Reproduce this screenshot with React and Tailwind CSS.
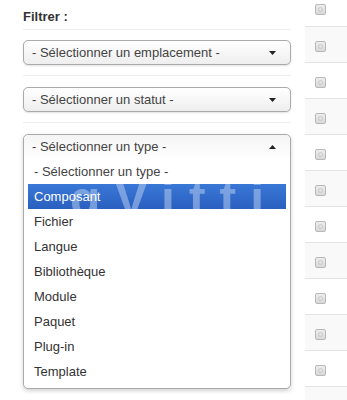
import React from "react";

const OPTIONS = ["Fichier", "Langue", "Bibliothèque", "Module", "Paquet", "Plug-in", "Template"];

function Caret({ up }) {
  return (
    <svg width="7" height="4" viewBox="0 0 7 4" className="shrink-0">
      {up ? <path d="M0 4 L3.5 0 L7 4 Z" fill="#222" /> : <path d="M0 0 L7 0 L3.5 4 Z" fill="#222" />}
    </svg>
  );
}

function Select({ label }) {
  return (
    <div className="flex h-[25px] items-center justify-between rounded-[5px] border border-[#aaa] bg-gradient-to-b from-white to-[#eee] pr-[14px] pl-[8px] text-[13px] text-[#444] shadow-[0_1px_2px_rgba(0,0,0,0.12)]">
      <span>{label}</span>
      <Caret />
    </div>
  );
}

function Checkbox() {
  return (
    <div className="flex h-[11px] w-[11px] items-center justify-center rounded-[2px] border border-[#b8b8b8] bg-gradient-to-b from-[#eee] to-[#d9d9d9]">
      <div className="h-[5px] w-[5px] rounded-full border border-[#c8c8c8]" />
    </div>
  );
}

export default function App() {
  const rows = Array.from({ length: 12 });
  return (
    <div className="flex h-[400px] w-[347px] overflow-hidden bg-white font-['Liberation_Sans',Arial,sans-serif]">
      <div className="w-[305px] shrink-0 pt-[7px] pr-[14px] pl-[23px]">
        <div className="text-[13px] leading-[20px] font-bold text-[#333]">Filtrer :</div>
        <div className="mt-[2px] mb-[10px] border-t border-[#eee]" />
        <Select label="- Sélectionner un emplacement -" />
        <div className="mt-[10px] mb-[11px] border-t border-[#eee]" />
        <Select label="- Sélectionner un statut -" />
        <div className="mt-[10px] mb-[11px] border-t border-[#eee]" />
        <div className="rounded-[5px] border border-[#aaa] bg-white pb-[4px] text-[13px] text-[#333] shadow-[0_2px_4px_rgba(0,0,0,0.18)]">
          <div className="flex h-[24px] items-center justify-between rounded-t-[5px] bg-gradient-to-b from-[#f4f4f4] to-white pr-[14px] pl-[8px] text-[#444]">
            <span>- Sélectionner un type -</span>
            <Caret up />
          </div>
          <div className="px-[4px]">
            <div className="flex h-[25px] items-center pl-[6px] text-[#444]">- Sélectionner un type -</div>
            <div className="relative flex h-[25px] items-center overflow-hidden bg-gradient-to-b from-[#3a78d6] to-[#2a5fc0] pl-[6px] text-white">
              <span
                aria-hidden="true"
                className="absolute top-[-10px] left-[42px] font-['Liberation_Sans',sans-serif] text-[50px] leading-none font-bold tracking-[14px] whitespace-nowrap text-[#b4cbee]/55"
              >
                gVitti
              </span>
              <span className="relative">Composant</span>
            </div>
            {OPTIONS.map((o) => (
              <div key={o} className="flex h-[25px] items-center pl-[6px]">
                {o}
              </div>
            ))}
          </div>
        </div>
      </div>
      <div className="mt-[-10px] flex-1">
        {rows.map((_, i) => (
          <div
            key={i}
            className={`h-[36px] pt-[14px] pl-[10px] ${i > 0 ? "border-t border-[#e4e4e4]" : ""} ${i % 2 === 1 ? "bg-[#f9f9f9]" : "bg-white"}`}
          >
            <Checkbox />
          </div>
        ))}
      </div>
    </div>
  );
}
